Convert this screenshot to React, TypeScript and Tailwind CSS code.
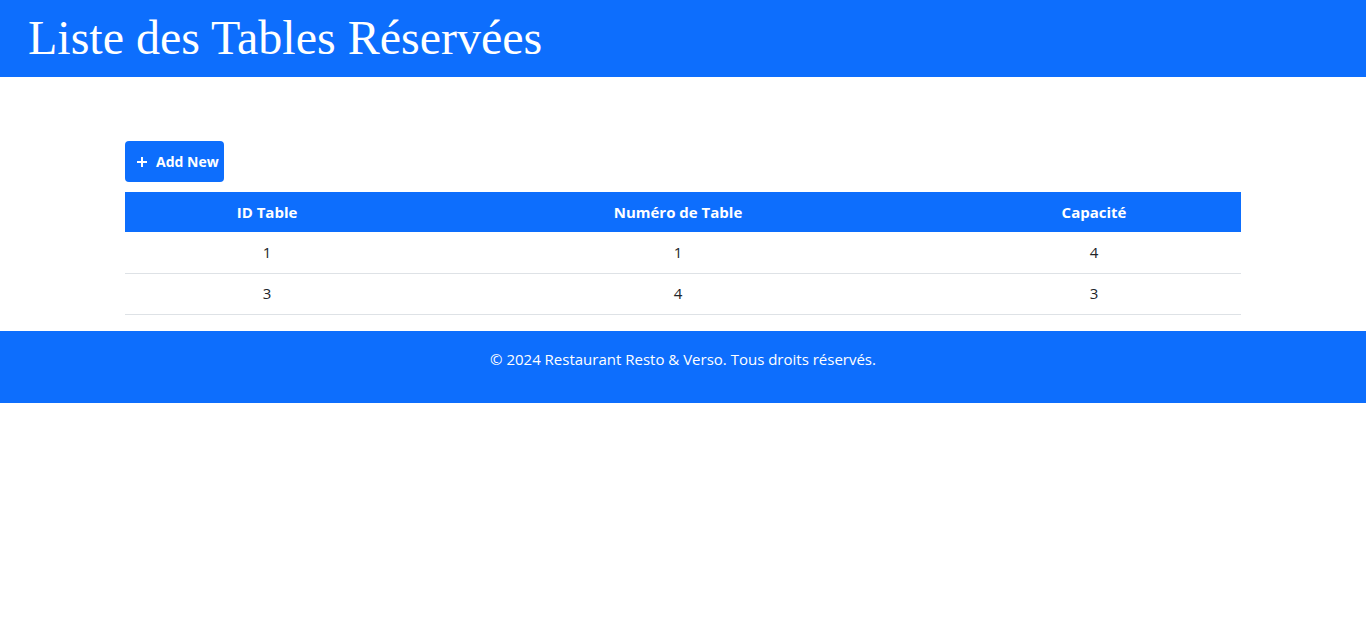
export default function App() {
  const rows = [
    { id: 1, numero: 1, capacite: 4 },
    { id: 3, numero: 4, capacite: 3 },
  ];

  return (
    <div className="bg-white text-[#212529] font-['Open_Sans','Noto_Sans',sans-serif]">
      <header className="bg-[#0d6efd] h-[77px] px-[28px] flex items-center">
        <h1 className="text-white text-[48px] leading-none font-['Liberation_Serif',serif] font-normal -mt-[2px]">
          Liste des Tables Réservées
        </h1>
      </header>

      <main className="w-[1116px] mx-auto pt-[64px] pb-[16px]">
        <button className="h-[41px] w-[99px] flex items-center gap-[8px] pl-[11px] bg-[#0d6efd] text-white rounded-[4px] text-[14px] font-bold whitespace-nowrap">
          <svg width="12" height="12" viewBox="0 0 12 12" fill="none">
            <path d="M6 1v10M1 6h10" stroke="white" strokeWidth="2" />
          </svg>
          Add New
        </button>

        <table className="w-full mt-[10px] text-[15px] border-collapse">
          <thead>
            <tr className="bg-[#0d6efd] text-white h-[40px]">
              <th className="w-[284px] font-bold">ID Table</th>
              <th className="w-[538px] font-bold">Numéro de Table</th>
              <th className="font-bold">Capacité</th>
            </tr>
          </thead>
          <tbody>
            {rows.map((r) => (
              <tr key={r.id} className="h-[41px] border-b border-[#dee2e6] text-center">
                <td>{r.id}</td>
                <td>{r.numero}</td>
                <td>{r.capacite}</td>
              </tr>
            ))}
          </tbody>
        </table>
      </main>

      <footer className="bg-[#0d6efd] text-white h-[72px] pt-[16px] text-center text-[15px]">
        <p className="leading-[24px]">© 2024 Restaurant Resto &amp; Verso. Tous droits réservés.</p>
      </footer>
    </div>
  );
}
